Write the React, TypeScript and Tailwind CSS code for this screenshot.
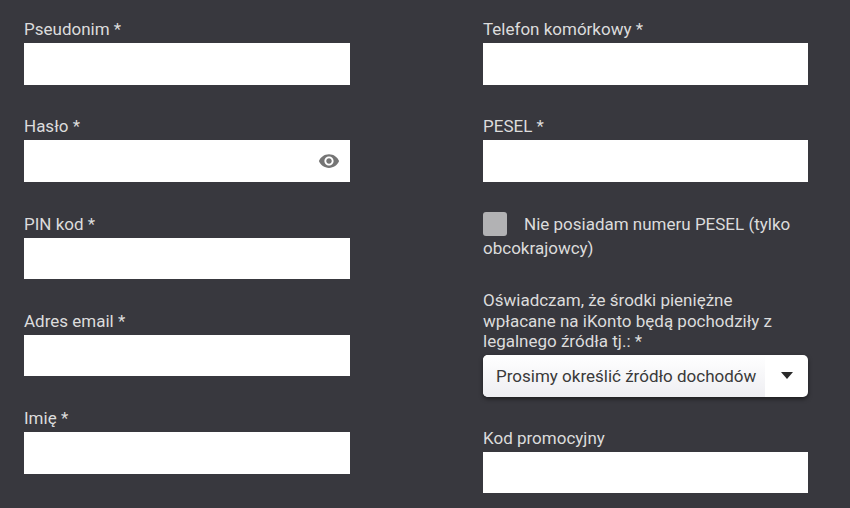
const labelClass = 'block h-6 text-[17px] leading-6 text-[#dcdcdc]';
const inputClass = 'block h-[41.5px] w-full bg-white';

function Field({ label, className = '', children }: { label: string; className?: string; children?: React.ReactNode }) {
  return (
    <div className={className}>
      <label className={labelClass}>{label}</label>
      <div className={`${inputClass} relative mt-0.5`}>{children}</div>
    </div>
  );
}

function EyeIcon() {
  return (
    <svg viewBox="0 0 24 24" className="absolute right-[10px] top-[10px] h-[22px] w-[22px] fill-[#757575]">
      <path d="M12 4.5C7 4.5 2.73 7.61 1 12c1.73 4.39 6 7.5 11 7.5s9.27-3.11 11-7.5c-1.73-4.39-6-7.5-11-7.5zM12 17c-2.76 0-5-2.24-5-5s2.24-5 5-5 5 2.24 5 5-2.24 5-5 5zm0-8c-1.66 0-3 1.34-3 3s1.34 3 3 3 3-1.34 3-3-1.34-3-3-3z" />
    </svg>
  );
}

export default function App() {
  return (
    <div className="h-[508px] w-[850px] overflow-hidden bg-[#38383e] font-['Roboto',sans-serif]">
      <div className="flex gap-[133px] pl-6 pt-[17px]">
        <div className="flex w-[326px] flex-col gap-[29.75px]">
          <Field label="Pseudonim *" />
          <Field label="Hasło *">
            <EyeIcon />
          </Field>
          <Field label="PIN kod *" />
          <Field label="Adres email *" />
          <Field label="Imię *" />
        </div>

        <div className="flex w-[325px] flex-col">
          <Field label="Telefon komórkowy *" />
          <Field label="PESEL *" className="mt-[29.5px]" />

          <p className="mt-[30px] text-[17px] leading-6 text-[#dcdcdc]">
            <span className="mr-[17px] inline-block h-6 w-6 rounded-[3px] bg-[#b2b2b4] align-top" />
            Nie posiadam numeru PESEL (tylko obcokrajowcy)
          </p>

          <label className="mt-[30.5px] block text-[17px] leading-[20.5px] text-[#dcdcdc]">
            Oświadczam, że środki pieniężne wpłacane na iKonto będą pochodziły z legalnego źródła tj.: *
          </label>
          <div className="mt-[3px] flex h-[42px] items-center justify-between overflow-hidden rounded-[5px] bg-white pr-[15px] shadow-[0_2px_4px_rgba(0,0,0,0.5)]">
            <span className="h-full bg-gradient-to-b from-white to-[#eeeef2] pl-[13px] pr-[9px] text-[17px] leading-[42px] text-[#3a3a3a]">
              Prosimy określić źródło dochodów
            </span>
            <svg viewBox="0 0 12 7" className="h-[7px] w-3 fill-[#2a2a2a]">
              <path d="M0 0h12L6 7z" />
            </svg>
          </div>

          <Field label="Kod promocyjny" className="mt-[29px]" />
        </div>
      </div>
    </div>
  );
}
